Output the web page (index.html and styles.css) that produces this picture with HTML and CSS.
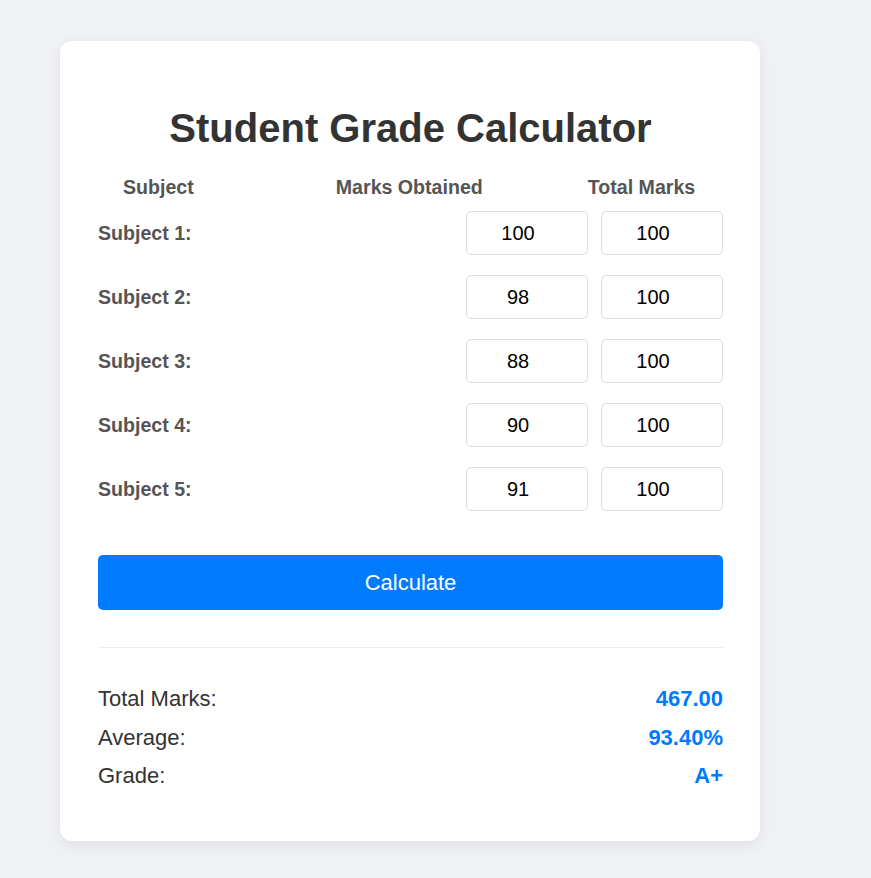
FILE: index.html
```html
<!DOCTYPE html>
<html lang="en">
<head>
<meta charset="UTF-8">
<title>Student Grade Calculator</title>
<link rel="stylesheet" href="styles.css">
</head>
<body>
<div class="page">
  <div class="card">
    <h1 class="title">Student Grade Calculator</h1>
    <div class="head-row">
      <span class="h-subject">Subject</span>
      <span class="h-marks">Marks Obtained</span>
      <span class="h-total">Total Marks</span>
    </div>
    <div class="row">
      <label class="label">Subject 1:</label>
      <input class="field" type="text" value="100">
      <input class="field" type="text" value="100">
    </div>
    <div class="row">
      <label class="label">Subject 2:</label>
      <input class="field" type="text" value="98">
      <input class="field" type="text" value="100">
    </div>
    <div class="row">
      <label class="label">Subject 3:</label>
      <input class="field" type="text" value="88">
      <input class="field" type="text" value="100">
    </div>
    <div class="row">
      <label class="label">Subject 4:</label>
      <input class="field" type="text" value="90">
      <input class="field" type="text" value="100">
    </div>
    <div class="row">
      <label class="label">Subject 5:</label>
      <input class="field" type="text" value="91">
      <input class="field" type="text" value="100">
    </div>
    <button class="calc-btn" type="button">Calculate</button>
    <div class="results">
      <p class="result"><span>Total Marks:</span><span class="value">467.00</span></p>
      <p class="result"><span>Average:</span><span class="value">93.40%</span></p>
      <p class="result"><span>Grade:</span><span class="value">A+</span></p>
    </div>
  </div>
</div>
</body>
</html>
```
FILE: styles.css
```css
* { box-sizing: border-box; }

body {
  margin: 0;
  background: #f0f1f5;
  font-family: "Liberation Sans", Arial, sans-serif;
  color: #333;
}

.page {
  padding: 41px 0 38px 60px;
}

.card {
  width: 700px;
  background: #fff;
  border-radius: 12px;
  padding: 38px 37px 38px 38px;
  box-shadow: 0 4px 14px rgba(0, 0, 0, 0.07);
}

.title {
  font-size: 40px;
  font-weight: bold;
  text-align: center;
  color: #333;
  margin: 27px 0 25px;
  line-height: normal;
}

.head-row {
  display: flex;
  padding-left: 25px;
  font-size: 19.6px;
  font-weight: bold;
  color: #555;
  margin-bottom: 12px;
}

.h-marks { margin-left: 142px; }
.h-total { margin-left: 105px; }

.row {
  display: flex;
  align-items: center;
  gap: 13px;
  margin-bottom: 20px;
}

.label {
  flex: 1;
  font-size: 19.6px;
  font-weight: bold;
  color: #555;
}

.field {
  width: 122px;
  height: 44px;
  border: 1px solid #ddd;
  border-radius: 5px;
  font-family: "Liberation Sans", Arial, sans-serif;
  font-size: 20px;
  text-align: center;
  color: #000;
  padding: 0 20px 0 2px;
  outline: none;
}

.calc-btn {
  display: block;
  width: 100%;
  height: 55px;
  margin-top: 44px;
  border: none;
  border-radius: 5px;
  background: #007bff;
  color: #fff;
  font-family: "Liberation Sans", Arial, sans-serif;
  font-size: 22px;
}

.results {
  margin-top: 37px;
  border-top: 1px solid #eee;
  padding-top: 38px;
}

.result {
  display: flex;
  justify-content: space-between;
  font-size: 22px;
  margin: 0 0 12.5px;
  color: #333;
}

.result:last-child { margin-bottom: 14px; }

.value {
  font-weight: bold;
  color: #007bff;
}
```
